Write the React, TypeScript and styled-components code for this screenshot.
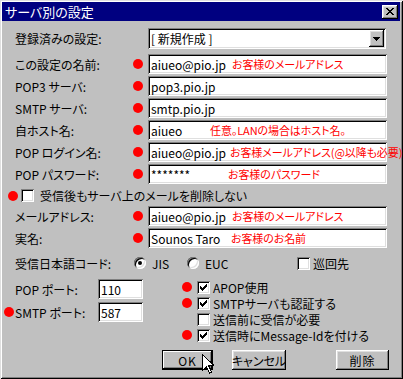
import React from "react";
import styled, { createGlobalStyle, css } from "styled-components";

const GlobalStyle = createGlobalStyle`
  html, body {
    margin: 0;
    padding: 0;
    background: #c0c0c0;
  }
  body {
    font-family: "Noto Sans CJK JP", "Liberation Sans", sans-serif;
    font-size: 12px;
    font-feature-settings: "palt";
    color: #000;
  }
`;

const raised = css`
  background: #c0c0c0;
  box-shadow: inset -1px -1px 0 #000, inset 1px 1px 0 #fff,
    inset -2px -2px 0 #808080, inset 2px 2px 0 #dfdfdf;
`;

const sunken = css`
  background: #fff;
  box-shadow: inset 1px 1px 0 #808080, inset -1px -1px 0 #fff,
    inset 2px 2px 0 #000, inset -2px -2px 0 #dfdfdf;
`;

const Window = styled.div`
  position: relative;
  width: 403px;
  height: 379px;
  box-sizing: border-box;
  padding: 2px 3px 0 2px;
  background: #c0c0c0;
  box-shadow: inset 1px 1px 0 #dfdfdf, inset -1px -1px 0 #000,
    inset 2px 2px 0 #fff, inset -2px -2px 0 #808080;
  display: flex;
  flex-direction: column;
  overflow: hidden;
`;

const TitleBar = styled.div`
  height: 19px;
  background: #000080;
  color: #fff;
  display: flex;
  align-items: center;
  justify-content: space-between;
  padding: 0 2px 0 3px;
  font-size: 13px;
`;

const CloseButton = styled.div`
  ${raised};
  width: 16px;
  height: 14px;
  display: flex;
  align-items: center;
  justify-content: center;
`;

const Content = styled.div`
  display: flex;
  flex-direction: column;
  padding-top: 7px;
`;

const FieldRow = styled.div<{ $mt?: number; $h?: number }>`
  display: flex;
  align-items: center;
  height: ${({ $h }) => $h ?? 20}px;
  margin-top: ${({ $mt }) => $mt ?? 2}px;
  padding-left: 13px;
`;

const Label = styled.div<{ $w?: number }>`
  width: ${({ $w }) => $w ?? 116}px;
  white-space: nowrap;
  flex-shrink: 0;
`;

const DotSlot = styled.div`
  width: 17px;
  display: flex;
  align-items: center;
  padding-left: 2px;
  box-sizing: border-box;
  flex-shrink: 0;
`;

const Dot = styled.span`
  display: block;
  width: 10px;
  height: 10px;
  border-radius: 50%;
  background: #ff0000;
`;

const Field = styled.div<{ $w?: number }>`
  ${sunken};
  position: relative;
  width: ${({ $w }) => $w ?? 239}px;
  height: 100%;
  box-sizing: border-box;
  display: flex;
  align-items: center;
  padding-left: 3px;
  white-space: nowrap;
  flex-shrink: 0;
`;

const Note = styled.span<{ $x: number }>`
  position: absolute;
  left: ${({ $x }) => $x}px;
  top: 50%;
  transform: translateY(-52%);
  color: #ff0000;
  font-size: 11px;
  letter-spacing: -0.1px;
  white-space: nowrap;
`;

const DropArrow = styled.div`
  ${raised};
  position: absolute;
  right: 2px;
  top: 2px;
  width: 15px;
  height: 17px;
  display: flex;
  align-items: center;
  justify-content: center;
`;

const CheckRow = styled.div<{ $mt?: number }>`
  display: flex;
  align-items: center;
  height: 13px;
  margin-top: ${({ $mt }) => $mt ?? 0}px;
  padding-left: 6px;
  gap: 3px;
`;

const Box = styled.div`
  ${sunken};
  width: 13px;
  height: 13px;
  flex-shrink: 0;
  display: flex;
  align-items: center;
  justify-content: center;
`;

const BoxLabel = styled.span`
  margin-left: 3px;
  white-space: nowrap;
`;

const RadioRow = styled.div`
  display: flex;
  align-items: center;
  height: 14px;
  margin-top: 8px;
  padding-left: 13px;
`;

const Option = styled.div<{ $w: number }>`
  width: ${({ $w }) => $w}px;
  display: flex;
  align-items: center;
  gap: 6px;
  flex-shrink: 0;
`;

const Radio = styled.div<{ $on?: boolean }>`
  width: 12px;
  height: 12px;
  border-radius: 50%;
  background: #fff;
  box-shadow: inset 1px 1px 0 #808080, inset -1px -1px 0 #fff,
    inset 2px 2px 0 #000, inset -2px -2px 0 #dfdfdf;
  display: flex;
  align-items: center;
  justify-content: center;
  &::after {
    content: "";
    width: 4px;
    height: 4px;
    border-radius: 50%;
    background: ${({ $on }) => ($on ? "#000" : "transparent")};
  }
`;

const Lower = styled.div`
  display: flex;
  margin-top: 9px;
`;

const PortCol = styled.div`
  width: 180px;
  display: flex;
  flex-direction: column;
  gap: 3px;
`;

const PortRow = styled.div`
  display: flex;
  align-items: center;
  height: 20px;
`;

const PortDot = styled.div`
  width: 13px;
  display: flex;
  justify-content: flex-end;
  padding-right: 1px;
  box-sizing: border-box;
  flex-shrink: 0;
`;

const OptCol = styled.div`
  display: flex;
  flex-direction: column;
`;

const OptRow = styled.div`
  display: flex;
  align-items: center;
  height: 16px;
`;

const OptDot = styled.div`
  width: 15px;
  flex-shrink: 0;
`;

const ButtonRow = styled.div`
  display: flex;
  align-items: center;
  height: 20px;
  margin-top: 7px;
  padding: 0 11px 0 160px;
`;

const Button = styled.div<{
  $w: number;
  $default?: boolean;
  $push?: boolean;
  $spacing?: number;
}>`
  ${raised};
  position: relative;
  width: ${({ $w }) => $w}px;
  height: 20px;
  box-sizing: border-box;
  display: flex;
  align-items: center;
  justify-content: center;
  white-space: nowrap;
  letter-spacing: ${({ $spacing }) => $spacing ?? 1}px;
  flex-shrink: 0;
  margin-left: ${({ $push }) => ($push ? "auto" : "0")};
  ${({ $default }) =>
    $default &&
    css`
      box-shadow: inset 0 0 0 1px #000, inset -2px -2px 0 #000,
        inset 2px 2px 0 #fff, inset -3px -3px 0 #808080;
    `};
`;

const ButtonGap = styled.div`
  width: 19px;
`;

const Cursor = styled.svg`
  position: absolute;
  left: 40px;
  top: 4px;
`;

const Check = () => (
  <svg width="9" height="9" viewBox="0 0 9 9" shapeRendering="crispEdges">
    <path d="M1 3h1v1h1v1h1v-1h1v-1h1v-1h1v-1h1v3h-1v1h-1v1h-1v1h-1v1h-1v-1h-1v-1h-1z" fill="#000" />
  </svg>
);

interface FieldDef {
  label: string;
  value: string;
  note?: string;
  noteX?: number;
}

const fields: FieldDef[] = [
  { label: "この設定の名前:", value: "aiueo@pio.jp", note: "お客様のメールアドレス", noteX: 84 },
  { label: "POP3 サーバ:", value: "pop3.pio.jp" },
  { label: "SMTP サーバ:", value: "smtp.pio.jp" },
  { label: "自ホスト名:", value: "aiueo", note: "任意。LANの場合はホスト名。", noteX: 62 },
  { label: "POP ログイン名:", value: "aiueo@pio.jp", note: "お客様メールアドレス(@以降も必要)", noteX: 82 },
  { label: "POP パスワード:", value: "*******", note: "お客様のパスワード", noteX: 80 },
];

const lowerFields: FieldDef[] = [
  { label: "メールアドレス:", value: "aiueo@pio.jp", note: "お客様のメールアドレス", noteX: 84 },
  { label: "実名:", value: "Sounos Taro", note: "お客様のお名前", noteX: 83 },
];

const options = [
  { label: "APOP使用", checked: true, dot: true },
  { label: "SMTPサーバも認証する", checked: true, dot: true },
  { label: "送信前に受信が必要", checked: false, dot: false },
  { label: "送信時にMessage-Idを付ける", checked: true, dot: true },
];

const renderField = (f: FieldDef, first: boolean, firstGap: number) => (
  <FieldRow key={f.label} $mt={first ? firstGap : 2}>
    <Label>{f.label}</Label>
    <DotSlot>
      <Dot />
    </DotSlot>
    <Field>
      {f.value}
      {f.note && <Note $x={f.noteX ?? 80}>{f.note}</Note>}
    </Field>
  </FieldRow>
);

export default function App() {
  return (
    <>
      <GlobalStyle />
      <Window>
        <TitleBar>
          <span>サーバ別の設定</span>
          <CloseButton>
            <svg width="8" height="7" viewBox="0 0 8 7" shapeRendering="crispEdges">
              <path
                d="M0 0h2v1h1v1h2v-1h1v-1h2v1h-1v1h-1v1h-1v1h1v1h1v1h1v1h-2v-1h-1v-1h-2v1h-1v1h-2v-1h1v-1h1v-1h1v-1h-1v-1h-1v-1h-1z"
                fill="#000"
              />
            </svg>
          </CloseButton>
        </TitleBar>
        <Content>
          <FieldRow $mt={0} $h={21}>
            <Label $w={133}>登録済みの設定:</Label>
            <Field $w={238}>
              [ 新規作成 ]
              <DropArrow>
                <svg width="7" height="4" viewBox="0 0 7 4" shapeRendering="crispEdges">
                  <path d="M0 0h7v1h-1v1h-1v1h-1v1h-1v-1h-1v-1h-1v-1h-1z" fill="#000" />
                </svg>
              </DropArrow>
            </Field>
          </FieldRow>
          {fields.map((f, i) => renderField(f, i === 0, 5))}
          <CheckRow $mt={5}>
            <Dot />
            <Box />
            <BoxLabel>受信後もサーバ上のメールを削除しない</BoxLabel>
          </CheckRow>
          {lowerFields.map((f, i) => renderField(f, i === 0, 4))}
          <RadioRow>
            <Label $w={119}>受信日本語コード:</Label>
            <Option $w={53}>
              <Radio $on />
              <span>JIS</span>
            </Option>
            <Option $w={110}>
              <Radio />
              <span>EUC</span>
            </Option>
            <Box />
            <BoxLabel>巡回先</BoxLabel>
          </RadioRow>
          <Lower>
            <PortCol>
              <PortRow>
                <PortDot />
                <Label $w={83}>POP ポート:</Label>
                <Field $w={45}>110</Field>
              </PortRow>
              <PortRow>
                <PortDot>
                  <Dot />
                </PortDot>
                <Label $w={83}>SMTP ポート:</Label>
                <Field $w={45}>587</Field>
              </PortRow>
            </PortCol>
            <OptCol>
              {options.map((o) => (
                <OptRow key={o.label}>
                  <OptDot>{o.dot && <Dot />}</OptDot>
                  <Box>{o.checked && <Check />}</Box>
                  <BoxLabel>{o.label}</BoxLabel>
                </OptRow>
              ))}
            </OptCol>
          </Lower>
          <ButtonRow>
            <Button $w={51} $default>
              OK
              <Cursor width="12" height="20" viewBox="0 0 12 20" shapeRendering="crispEdges">
                <path
                  d="M0.5 0.5v16l4-4 3 6.5 2-1-3-6.5h5.5z"
                  fill="#fff"
                  stroke="#000"
                  strokeWidth="1"
                />
              </Cursor>
            </Button>
            <ButtonGap />
            <Button $w={54} $spacing={0}>
              キャンセル
            </Button>
            <Button $w={53} $push>
              削除
            </Button>
          </ButtonRow>
        </Content>
      </Window>
    </>
  );
}
